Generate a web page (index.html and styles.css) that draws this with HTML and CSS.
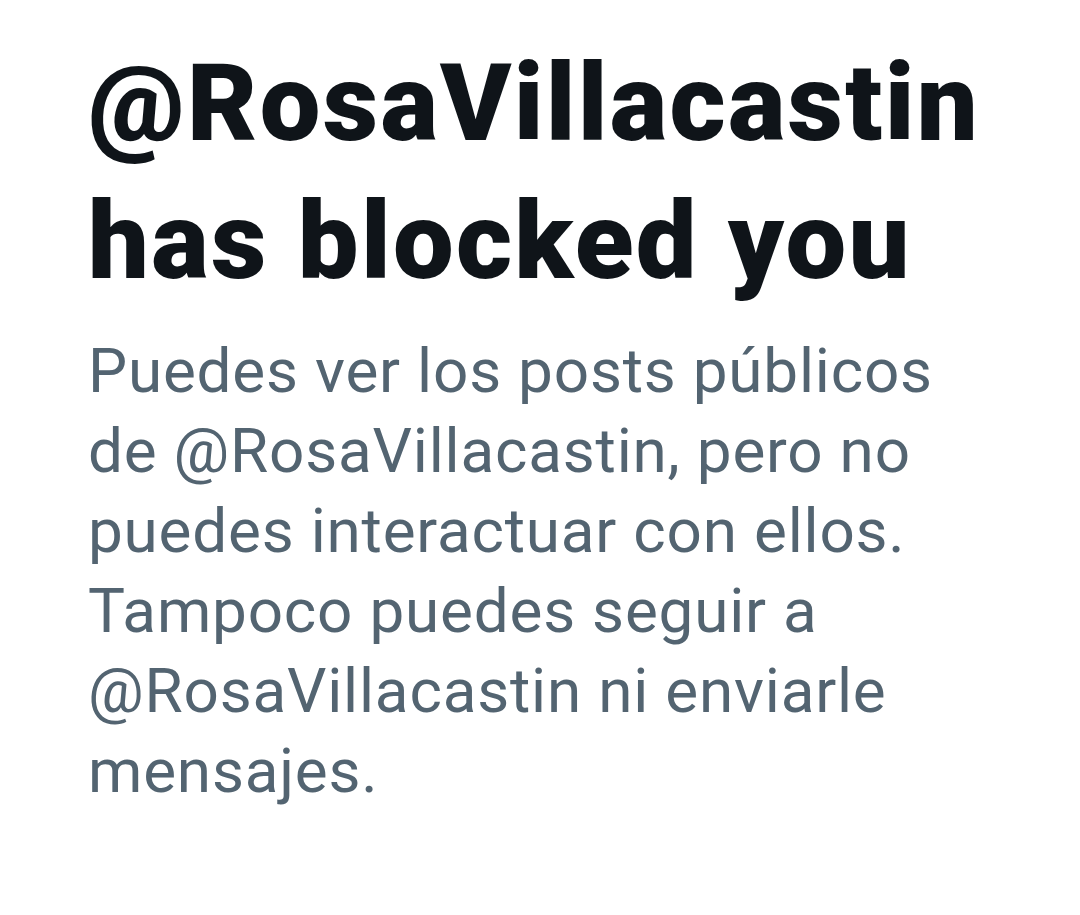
FILE: index.html
```html
<!DOCTYPE html>
<html lang="en">
<head>
    <meta charset="UTF-8">
    <meta name="viewport" content="width=device-width, initial-scale=1.0">
    <title>Blocked</title>
    <link rel="stylesheet" href="styles.css">
</head>
<body>

    <div class="container">
        <h1>@RosaVillacastin has blocked you</h1>
        <p class="message">Puedes ver los posts públicos de @RosaVillacastin, pero no puedes interactuar con ellos. Tampoco puedes seguir a @RosaVillacastin ni enviarle mensajes.</p>
    </div>

</body>
</html>
```

FILE: styles.css
```css
body {
    font-family: Roboto, "Noto Sans", sans-serif;
    background: #fff;
    margin: 0;
}

.container {
    padding: 34px 20px 0 88px;
    width: 950px;
}

h1 {
    font-size: 108px;
    line-height: 138px;
    font-weight: 900;
    color: #0f1419;
    margin: 0;
    letter-spacing: 2.3px;
}

.message {
    font-size: 62px;
    line-height: 80px;
    color: #536471;
    margin: 21px 0 0 0;
    letter-spacing: 0.8px;
    max-width: 860px;
}
```
